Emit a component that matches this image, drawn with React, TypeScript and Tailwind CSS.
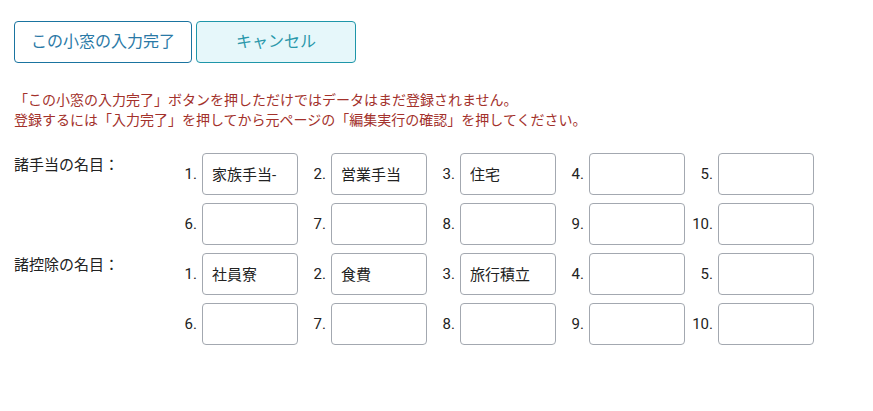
const allowances = ['家族手当-', '営業手当', '住宅', '', '', '', '', '', '', ''];
const deductions = ['社員寮', '食費', '旅行積立', '', '', '', '', '', '', ''];

const ItemGrid = ({label, values}: {label: string; values: string[]}) => {
  return (
    <div className="flex">
      <div className="w-[155px] pt-[1px] text-[15px] text-[#222]">{label}</div>
      <div className="grid grid-cols-5 gap-y-2">
        {values.map((value, i) => (
          <div key={i} className="flex w-[129px] items-center justify-end">
            <span className="mr-[5px] text-[15px] text-[#222]">{i + 1}.</span>
            <input
              defaultValue={value}
              className="h-[42px] w-[96px] rounded-[4px] border border-[#a3a8b0] bg-white px-[9px] pb-[1px] text-[15px] text-[#222] outline-none"
            />
          </div>
        ))}
      </div>
    </div>
  );
};

const App = () => {
  return (
    <div className="min-h-screen bg-white px-[14px] pt-[21px] font-['Roboto','Noto_Sans_CJK_JP',sans-serif]">
      <div className="flex gap-1">
        <button className="h-[42px] w-[178px] rounded-[4px] border border-[#1a74a0] bg-white text-[16px] text-[#2a79a6]">
          この小窓の入力完了
        </button>
        <button className="h-[42px] w-[160px] rounded-[4px] border border-[#1e96a9] bg-[#e6f7fa] text-[16px] text-[#2a98aa]">
          キャンセル
        </button>
      </div>
      <div className="mt-[27px] text-[14px] leading-[20px] text-[#a3312b]">
        <p>「この小窓の入力完了」ボタンを押しただけではデータはまだ登録されません。</p>
        <p>登録するには「入力完了」を押してから元ページの「編集実行の確認」を押してください。</p>
      </div>
      <div className="mt-[23px] flex flex-col gap-y-2">
        <ItemGrid label="諸手当の名目：" values={allowances} />
        <ItemGrid label="諸控除の名目：" values={deductions} />
      </div>
    </div>
  );
};

export default App;
